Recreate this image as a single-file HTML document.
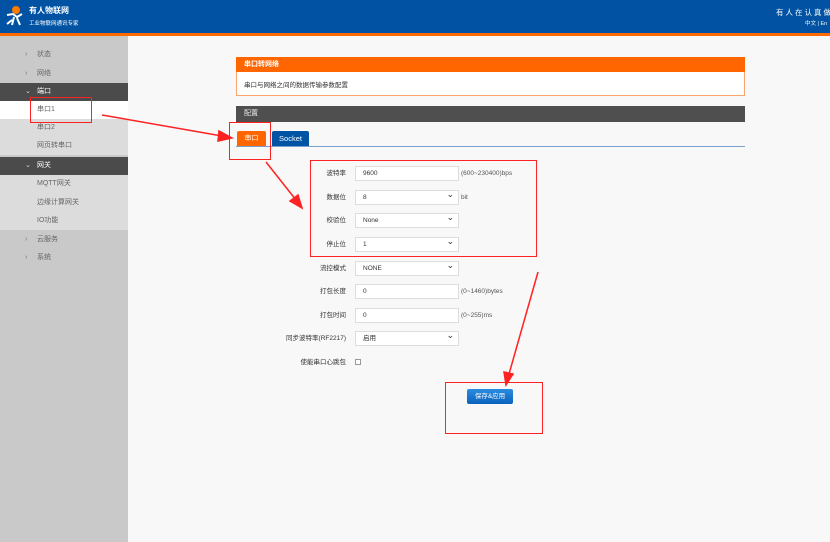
<!DOCTYPE html>
<html><head><meta charset="utf-8"><style>
*{margin:0;padding:0;box-sizing:border-box}
body{width:830px;height:542px;overflow:hidden;background:#f8f8f8;font-family:"Liberation Sans","Noto Sans CJK SC",sans-serif;font-size:7px;color:#333;position:relative}
.abs{position:absolute}
.hdr{left:0;top:0;width:830px;height:33px;background:#0152a2}
.ol{left:0;top:33px;width:830px;height:3px;background:#ff6a00}
.side{left:0;top:36px;width:128px;height:506px;background:#c9c9c9}
.it{position:absolute;left:0;width:128px;height:18px;line-height:18px;padding-left:37px;color:#666;font-size:7px}
.dk{background:#4b4b4b;color:#fff}
.sub{background:#dcdcdc}
.chev{position:absolute;left:25px;color:#777}
.lbl{position:absolute;width:100px;text-align:right;left:246px;font-size:6.5px;line-height:15px;height:15px}
.inp{position:absolute;left:355px;width:104px;height:15px;background:#fff;border:1px solid #ddd;padding-left:7px;line-height:13px;font-size:6.5px}
.sel:after{content:"⌄";position:absolute;right:4px;top:-3px;font-size:9px}
.unit{position:absolute;left:461px;font-size:6.5px;color:#555;line-height:15px}
.red{position:absolute;border:1.5px solid #f22}
</style></head><body>
<div class="abs hdr"></div>
<svg class="abs" style="left:4px;top:5px" width="22" height="22"><circle cx="12" cy="5" r="4" fill="#ff7a00"/><path d="M3 10 L9 9 L13 12 L18 9 M10 12 L8 20 M13 13 L16 20 M8 15 L3 19" stroke="#fff" stroke-width="2" fill="none"/></svg>
<div class="abs" style="left:29px;top:5px;color:#fff;font-weight:bold;font-size:8px">有人物联网</div>
<div class="abs" style="left:29px;top:19px;color:#fff;font-size:5.5px">工业物联网通讯专家</div>
<div class="abs" style="left:776px;top:7px;color:#fff;font-size:7.5px;letter-spacing:2px;white-space:nowrap">有人在认真做</div>
<div class="abs" style="left:805px;top:19px;color:#fff;font-size:5.5px;white-space:nowrap">中文 | En</div>
<div class="abs ol"></div>
<div class="abs side">
<div class="it" style="top:10px"><span class="chev">›</span>状态</div>
<div class="it" style="top:29px"><span class="chev">›</span>网络</div>
<div class="it dk" style="top:47px"><span class="chev" style="color:#ddd">⌄</span>端口</div>
<div class="it" style="top:65px;background:#fff">串口1</div>
<div class="it sub" style="top:83px">串口2</div>
<div class="it sub" style="top:101px">网页转串口</div>
<div class="it dk" style="top:121px"><span class="chev" style="color:#ddd">⌄</span>网关</div>
<div class="it sub" style="top:139px;height:19px">MQTT网关</div>
<div class="it sub" style="top:158px">边缘计算网关</div>
<div class="it sub" style="top:176px">IO功能</div>
<div class="it" style="top:195px"><span class="chev">›</span>云服务</div>
<div class="it" style="top:213px"><span class="chev">›</span>系统</div>
</div>
<div class="abs" style="left:236px;top:57px;width:509px;height:39px;border:1px solid #f9a56b;background:#fff"></div>
<div class="abs" style="left:236px;top:57px;width:509px;height:15px;background:#ff6600;color:#fff;font-weight:bold;padding-left:8px;line-height:15px">串口转网络</div>
<div class="abs" style="left:244px;top:79px;font-size:6.5px">串口与网络之间的数据传输参数配置</div>
<div class="abs" style="left:236px;top:106px;width:509px;height:16px;background:#4f4f4f;color:#eee;padding-left:8px;line-height:16px">配置</div>
<div class="abs" style="left:237px;top:131px;width:29px;height:15px;background:#ff6600;color:#fff;text-align:center;line-height:15px;border-radius:2px 2px 0 0">串口</div>
<div class="abs" style="left:272px;top:131px;width:37px;height:15px;background:#0153a3;color:#fff;text-align:center;line-height:15px;border-radius:2px 2px 0 0;font-size:7.5px">Socket</div>
<div class="abs" style="left:236px;top:146px;width:509px;height:1px;background:#7aa0cc"></div>

<div class="lbl" style="top:166px">波特率</div><div class="inp" style="top:166px">9600</div><div class="unit" style="top:166px">(600~230400)bps</div>
<div class="lbl" style="top:190px">数据位</div><div class="inp sel" style="top:190px">8</div><div class="unit" style="top:190px">bit</div>
<div class="lbl" style="top:213px">校验位</div><div class="inp sel" style="top:213px">None</div>
<div class="lbl" style="top:237px">停止位</div><div class="inp sel" style="top:237px">1</div>
<div class="lbl" style="top:261px">流控模式</div><div class="inp sel" style="top:261px">NONE</div>
<div class="lbl" style="top:284px">打包长度</div><div class="inp" style="top:284px">0</div><div class="unit" style="top:284px">(0~1460)bytes</div>
<div class="lbl" style="top:308px">打包时间</div><div class="inp" style="top:308px">0</div><div class="unit" style="top:308px">(0~255)ms</div>
<div class="lbl" style="top:331px">同步波特率(RF2217)</div><div class="inp sel" style="top:331px">启用</div>
<div class="lbl" style="top:355px">使能串口心跳包</div>
<div class="abs" style="left:355px;top:359px;width:6px;height:6px;border:1px solid #999;background:#fff"></div>
<div class="abs" style="left:467px;top:389px;width:46px;height:15px;background:linear-gradient(#2a8ce0,#0a62bd);color:#fff;text-align:center;line-height:15px;border-radius:2px;font-size:6.5px">保存&amp;应用</div>

<div class="red" style="left:30px;top:97px;width:62px;height:26px"></div>
<div class="red" style="left:229px;top:122px;width:42px;height:38px"></div>
<div class="red" style="left:310px;top:160px;width:227px;height:97px"></div>
<div class="red" style="left:445px;top:382px;width:98px;height:52px"></div>
<svg class="abs" style="left:0;top:0" width="830" height="542">
<g stroke="#f22" stroke-width="1.5" fill="#f22">
<line x1="102" y1="115" x2="222" y2="136"/><polygon points="232,138 219,131 218,141"/>
<line x1="266" y1="162" x2="296" y2="200"/><polygon points="302,208 298,195 290,201"/>
<line x1="538" y1="272" x2="509" y2="374"/><polygon points="506,385 504,372 513,374"/>
</g></svg>
</body></html>
